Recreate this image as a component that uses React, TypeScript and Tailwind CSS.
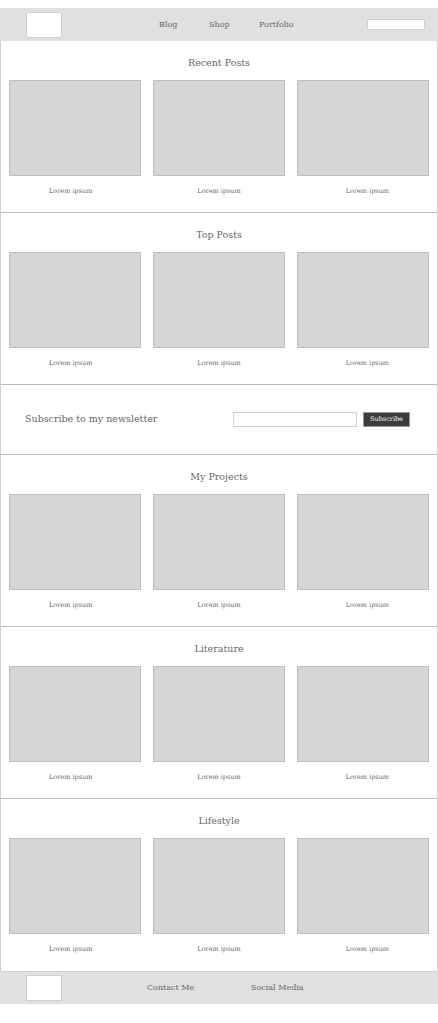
import React from 'react';

const font = { fontFamily: '"DejaVu Serif", "Liberation Serif", serif' };

function PostSection({ title, last }: { title: string; last?: boolean }) {
  return (
    <section
      className={`h-[172px] flex flex-col items-center ${last ? '' : 'border-b border-[#bdbdbd]'}`}
    >
      <h2 className="pt-[15px] text-[9.5px] leading-[14px] text-[#666]">{title}</h2>
      <div className="mt-[10px] w-full grid grid-cols-3 gap-[12px] px-[8px]">
        {[0, 1, 2].map((i) => (
          <div key={i} className="h-[96px] bg-[#d6d6d6] border border-[#bfbfbf]" />
        ))}
      </div>
      <div className="mt-[10px] w-full flex justify-between px-[48px] text-[6.5px] leading-[10px] text-[#666]">
        <span>Lorem ipsum</span>
        <span>Lorem ipsum</span>
        <span>Lorem ipsum</span>
      </div>
    </section>
  );
}

export default function App() {
  return (
    <div className="w-[438px] min-h-[1023px] bg-white pt-2" style={font}>
      <header className="h-[33px] bg-[#e0e0e0] flex items-center">
        <div className="ml-[26px] w-[36px] h-[26px] bg-white border border-[#cfcfcf]" />
        <nav className="ml-[97px] flex items-center text-[8px] text-[#666]">
          <a className="w-[50px]">Blog</a>
          <a className="w-[50px]">Shop</a>
          <a>Portfolio</a>
        </nav>
        <input className="ml-auto mr-[13px] w-[58px] h-[11px] bg-white border border-[#cfcfcf] outline-none" />
      </header>

      <main className="border-x border-[#cfcfcf]">
        <PostSection title="Recent Posts" />
        <PostSection title="Top Posts" />

        <section className="h-[70px] border-b border-[#bdbdbd] flex items-center">
          <p className="ml-[24px] text-[9.5px] text-[#666]">Subscribe to my newsletter</p>
          <input className="ml-auto w-[124px] h-[15px] bg-white border border-[#d0d0d0] outline-none" />
          <button className="ml-[6px] mr-[27px] w-[47px] h-[15px] bg-[#3c3c3c] text-white text-[6.5px] border border-[#999]">
            Subscribe
          </button>
        </section>

        <PostSection title="My Projects" />
        <PostSection title="Literature" />
        <PostSection title="Lifestyle" last />
      </main>

      <footer className="h-[33px] bg-[#e0e0e0] border-t border-[#cfcfcf] flex items-center">
        <div className="ml-[26px] w-[36px] h-[26px] bg-white border border-[#cfcfcf]" />
        <span className="ml-[85px] w-[104px] text-[8px] text-[#666]">Contact Me</span>
        <span className="text-[8px] text-[#666]">Social Media</span>
      </footer>
    </div>
  );
}
